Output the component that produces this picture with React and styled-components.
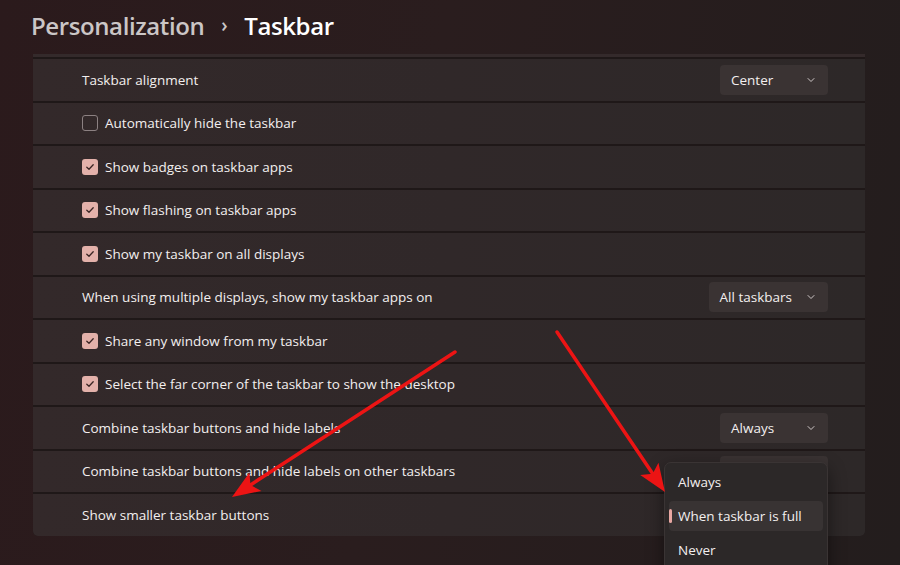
import React from "react";
import styled, { createGlobalStyle } from "styled-components";

const GlobalStyle = createGlobalStyle`
  html, body {
    margin: 0;
    padding: 0;
  }
  body {
    font-family: "Open Sans", "Noto Sans", sans-serif;
    background: #221b1b;
    overflow: hidden;
  }
`;

const rows = [
  { label: "Taskbar alignment", select: "Center" },
  { label: "Automatically hide the taskbar", check: false },
  { label: "Show badges on taskbar apps", check: true },
  { label: "Show flashing on taskbar apps", check: true },
  { label: "Show my taskbar on all displays", check: true },
  { label: "When using multiple displays, show my taskbar apps on", select: "All taskbars" },
  { label: "Share any window from my taskbar", check: true },
  { label: "Select the far corner of the taskbar to show the desktop", check: true },
  { label: "Combine taskbar buttons and hide labels", select: "Always" },
  { label: "Combine taskbar buttons and hide labels on other taskbars", select: "Always" },
  { label: "Show smaller taskbar buttons" },
];

const menuItems = ["Always", "When taskbar is full", "Never"];

const Chevron = () => (
  <svg width="10" height="10" viewBox="0 0 10 10">
    <path d="M2 3.5 L5 6.5 L8 3.5" fill="none" stroke="#cfc8c8" strokeWidth="1" strokeLinecap="round" strokeLinejoin="round" />
  </svg>
);

const Tick = () => (
  <svg width="12" height="12" viewBox="0 0 12 12">
    <path d="M2.8 6.2 L5 8.3 L9.2 3.8" fill="none" stroke="#3a2524" strokeWidth="1.3" strokeLinecap="round" strokeLinejoin="round" />
  </svg>
);

// filled arrowhead with a slightly notched back
function arrowHead(x1, y1, x2, y2, len = 28, half = 11) {
  const dx = x2 - x1;
  const dy = y2 - y1;
  const d = Math.hypot(dx, dy);
  const ux = dx / d;
  const uy = dy / d;
  const bx = x2 - ux * len;
  const by = y2 - uy * len;
  const nx = -uy;
  const ny = ux;
  return `${x2},${y2} ${bx + nx * half},${by + ny * half} ${x2 - ux * (len - 6)},${y2 - uy * (len - 6)} ${bx - nx * half},${by - ny * half}`;
}

const arrows = [
  [455, 352, 232, 497],
  [557, 332, 665, 492],
];

export default function App() {
  return (
    <Page>
      <GlobalStyle />
      <Header>
        <Crumb>Personalization</Crumb>
        <Sep>›</Sep>
        <Current>Taskbar</Current>
      </Header>
      <Card>
        <TopSliver />
        {rows.map((r) => (
          <Row key={r.label}>
            <Label>
              {r.check !== undefined && (
                <Box $checked={r.check}>{r.check && <Tick />}</Box>
              )}
              {r.label}
            </Label>
            {r.select && (
              <Select>
                <span>{r.select}</span>
                <Chevron />
              </Select>
            )}
          </Row>
        ))}
      </Card>

      <Menu>
        {menuItems.map((m, i) => (
          <MenuItem key={m} $active={i === 1}>
            {i === 1 && <Indicator />}
            {m}
          </MenuItem>
        ))}
      </Menu>

      <Overlay width="900" height="565" viewBox="0 0 900 565">
        {arrows.map(([x1, y1, x2, y2]) => {
          const d = Math.hypot(x2 - x1, y2 - y1);
          const ex = x2 - ((x2 - x1) / d) * 18;
          const ey = y2 - ((y2 - y1) / d) * 18;
          return (
            <g key={x1}>
              <line x1={x1} y1={y1} x2={ex} y2={ey} stroke="#ec1414" strokeWidth="3.5" strokeLinecap="round" />
              <polygon points={arrowHead(x1, y1, x2, y2)} fill="#ec1414" />
            </g>
          );
        })}
      </Overlay>
    </Page>
  );
}

const Page = styled.div`
  position: relative;
  width: 900px;
  height: 565px;
  overflow: hidden;
  background: linear-gradient(100deg, #2b1a1c 0%, #2a1d1e 45%, #231d1d 100%);
  color: #f2eeee;
`;

const Header = styled.div`
  display: flex;
  align-items: baseline;
  gap: 17px;
  padding: 9px 0 0 31px;
  height: 47px;
  box-sizing: border-box;
  font-weight: 600;
  font-size: 24px;
  letter-spacing: -0.4px;
`;

const Crumb = styled.span`
  color: #cbc6c6;
`;

const Sep = styled.span`
  color: #cbc6c6;
  font-size: 19px;
  position: relative;
  top: -3px;
`;

const Current = styled.span`
  color: #ffffff;
`;

const Card = styled.div`
  margin-left: 33px;
  margin-top: 7px;
  width: 832px;
  display: flex;
  flex-direction: column;
  gap: 2px;
  background: #1f1818;
  border-radius: 0 0 5px 5px;
  overflow: hidden;
`;

const TopSliver = styled.div`
  height: 3px;
  background: #342a2b;
`;

const Row = styled.div`
  height: 41.5px;
  display: flex;
  align-items: center;
  justify-content: space-between;
  padding: 0 37px 0 49px;
  background: linear-gradient(90deg, #33292a 0%, #302829 50%, #2d2828 100%);
`;

const Label = styled.div`
  display: flex;
  align-items: center;
  gap: 7px;
  font-size: 13.5px;
  color: #f3efef;
`;

const Box = styled.span`
  width: 16px;
  height: 16px;
  box-sizing: border-box;
  border-radius: 3px;
  display: flex;
  align-items: center;
  justify-content: center;
  background: ${(p) => (p.$checked ? "#e3b1aa" : "transparent")};
  border: ${(p) => (p.$checked ? "none" : "1px solid #8c8182")};
`;

const Select = styled.div`
  min-width: 108px;
  height: 30px;
  box-sizing: border-box;
  padding: 0 12px 0 11px;
  display: flex;
  align-items: center;
  justify-content: space-between;
  gap: 14px;
  border-radius: 4px;
  background: #3a3333;
  font-size: 13.5px;
  color: #f3efef;
`;

const Menu = styled.div`
  position: absolute;
  left: 664px;
  top: 462px;
  width: 164px;
  height: 120px;
  box-sizing: border-box;
  padding: 4px;
  display: flex;
  flex-direction: column;
  gap: 4px;
  background: #2c2828;
  border: 1px solid #3a3434;
  border-radius: 7px;
  box-shadow: 0 6px 18px rgba(0, 0, 0, 0.45);
`;

const MenuItem = styled.div`
  position: relative;
  height: 30px;
  display: flex;
  align-items: center;
  padding-left: 9px;
  border-radius: 4px;
  font-size: 13.5px;
  color: #f3efef;
  background: ${(p) => (p.$active ? "#383333" : "transparent")};
`;

const Indicator = styled.span`
  position: absolute;
  left: 0;
  top: 8px;
  width: 3px;
  height: 14px;
  border-radius: 2px;
  background: #e8a7a2;
`;

const Overlay = styled.svg`
  position: absolute;
  left: 0;
  top: 0;
  pointer-events: none;
`;
